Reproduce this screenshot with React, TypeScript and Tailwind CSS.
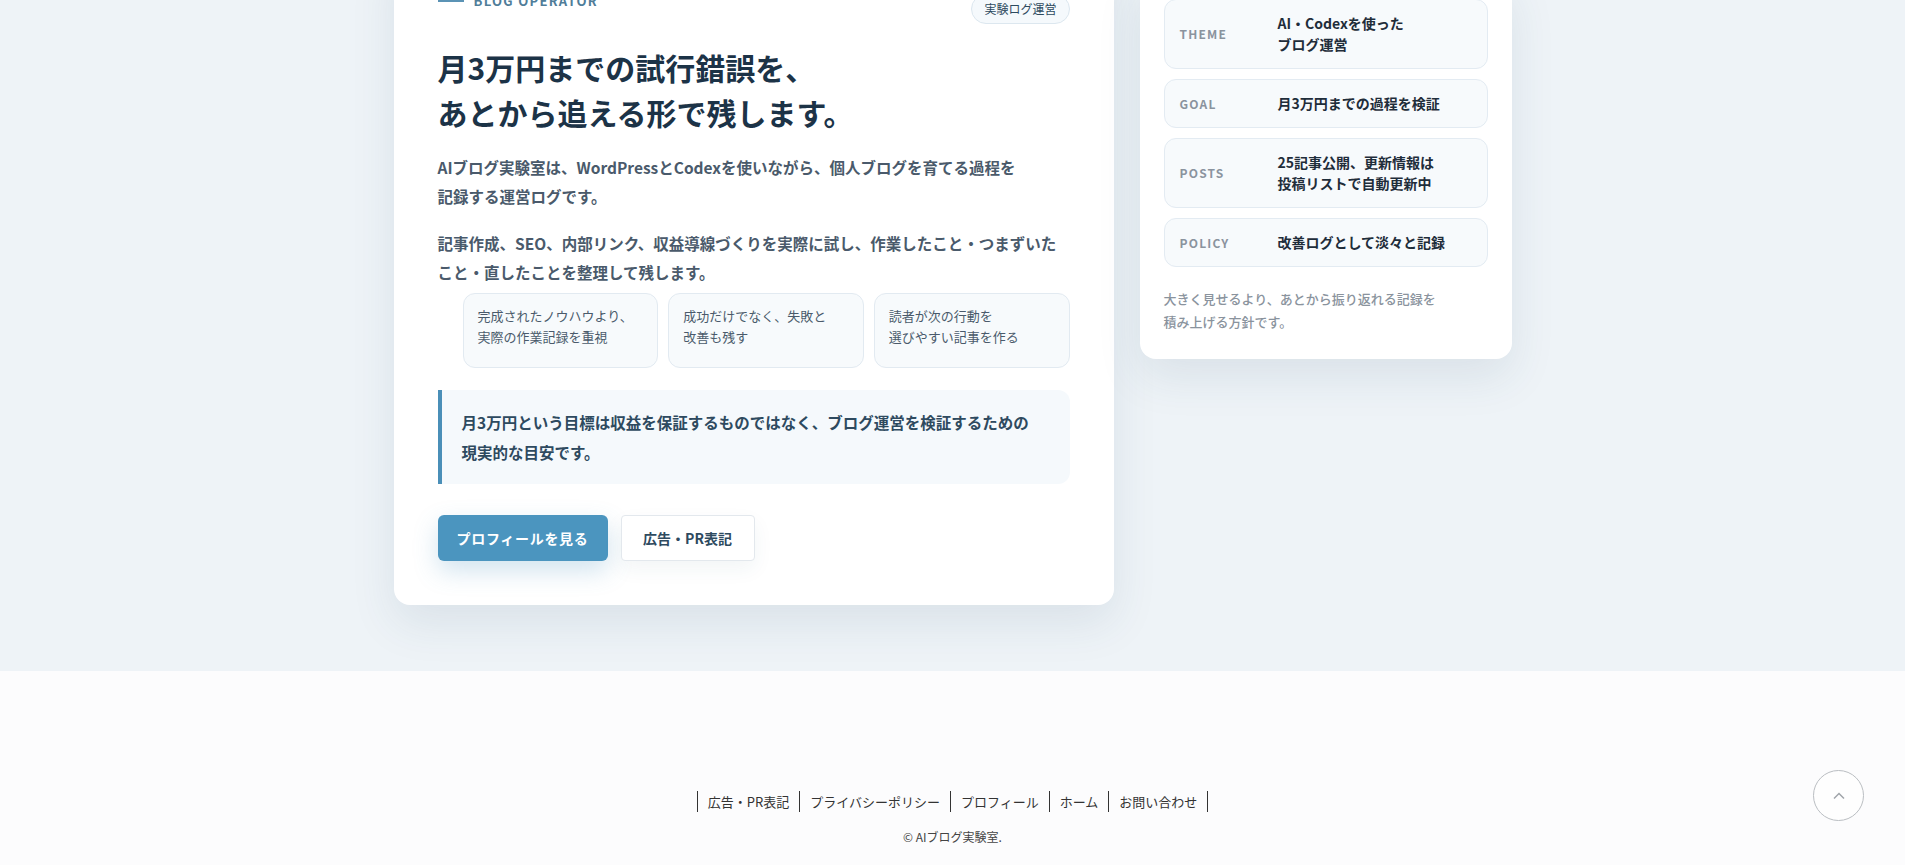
import React from "react";

const jp = { fontFamily: '"Noto Sans CJK JP", "Noto Sans", sans-serif' };

const rows = [
  { k: "THEME", v: ["AI・Codexを使った", "ブログ運営"] },
  { k: "GOAL", v: ["月3万円までの過程を検証"] },
  { k: "POSTS", v: ["25記事公開、更新情報は", "投稿リストで自動更新中"] },
  { k: "POLICY", v: ["改善ログとして淡々と記録"] },
];

const points = [
  ["完成されたノウハウより、", "実際の作業記録を重視"],
  ["成功だけでなく、失敗と", "改善も残す"],
  ["読者が次の行動を", "選びやすい記事を作る"],
];

const links = ["広告・PR表記", "プライバシーポリシー", "プロフィール", "ホーム", "お問い合わせ"];

export default function App() {
  return (
    <div className="min-h-[865px] bg-[#fcfcfd]" style={jp}>
      <section className="bg-[#eef3f7] pb-[66px] overflow-hidden">
        <div className="mx-auto w-[1118px] grid grid-cols-[720px_372px] gap-[26px] items-start -mt-[53px]">
          {/* main card */}
          <div className="bg-white rounded-[16px] shadow-[0_18px_45px_rgba(40,80,110,0.10)] px-[44px] pt-[44px] pb-[44px]">
            <div className="flex justify-between items-start">
              <div className="flex items-center gap-[10px] h-[20px]">
                <span className="block w-[26px] h-[2px] bg-[#5b93b5]" />
                <span className="text-[13px] font-semibold tracking-[0.1em] text-[#4f7d99]">BLOG OPERATOR</span>
              </div>
              <span className="mt-[3px] h-[30px] px-[12px] flex items-center rounded-full border border-[#dce7ef] bg-[#f5f9fc] text-[12px] text-[#2d4a5e]">
                実験ログ運営
              </span>
            </div>
            <h1 className="mt-[21px] text-[30px] leading-[45px] font-bold text-[#1c3347]">
              月3万円までの試行錯誤を、
              <br />
              あとから追える形で残します。
            </h1>
            <p className="mt-[18px] text-[15.5px] leading-[29px] font-semibold text-[#4a5a6b]">
              AIブログ実験室は、WordPressとCodexを使いながら、個人ブログを育てる過程を
              <br />
              記録する運営ログです。
            </p>
            <p className="mt-[18px] text-[15.5px] leading-[29px] font-semibold text-[#4a5a6b]">
              記事作成、SEO、内部リンク、収益導線づくりを実際に試し、作業したこと・つまずいたこと・直したことを整理して残します。
            </p>
            <ul className="mt-[6px] ml-[25px] grid grid-cols-3 gap-[10px]">
              {points.map((p, i) => (
                <li
                  key={i}
                  className="min-h-[75px] rounded-[12px] border border-[#e2eaf1] bg-[#f7fafc] px-[14px] pt-[11px] text-[13px] leading-[21px] text-[#4a5a6b]"
                >
                  {p[0]}
                  <br />
                  {p[1]}
                </li>
              ))}
            </ul>
            <div className="mt-[22px] border-l-[4px] border-[#4a8fb8] bg-[#f5f9fc] rounded-r-[12px] pl-[20px] pr-[20px] py-[17px] text-[15.5px] leading-[30px] font-semibold text-[#2e4a5f]">
              月3万円という目標は収益を保証するものではなく、ブログ運営を検証するための
              <br />
              現実的な目安です。
            </div>
            <div className="mt-[31px] flex gap-[13px]">
              <a className="h-[46px] w-[170px] flex items-center justify-center rounded-[6px] bg-[#4b95bf] text-white text-[14px] font-bold tracking-[0.05em] shadow-[0_10px_24px_rgba(75,149,191,0.25)]">
                プロフィールを見る
              </a>
              <a className="h-[46px] w-[134px] flex items-center justify-center rounded-[4px] bg-white border border-[#e3e8ed] text-[#2e4a5f] text-[14px] font-semibold shadow-[0_8px_20px_rgba(40,80,110,0.06)]">
                広告・PR表記
              </a>
            </div>
          </div>

          {/* side card */}
          <div className="mt-[28px] bg-white rounded-[16px] shadow-[0_18px_45px_rgba(40,80,110,0.10)] px-[24px] pt-[24px] pb-[26px]">
            <div className="flex flex-col gap-[10px]">
              {rows.map((r) => (
                <div
                  key={r.k}
                  className="grid grid-cols-[86px_1fr] gap-[12px] items-center rounded-[12px] border border-[#e3ebf2] bg-[#f7fafc] px-[15px] py-[13px]"
                >
                  <span className="text-[12px] font-bold tracking-[0.1em] text-[#8a939e]">{r.k}</span>
                  <span className="text-[14px] leading-[21px] font-semibold text-[#1f2d3a]">
                    {r.v.map((l, i) => (
                      <React.Fragment key={i}>
                        {i > 0 && <br />}
                        {l}
                      </React.Fragment>
                    ))}
                  </span>
                </div>
              ))}
            </div>
            <p className="mt-[20px] text-[13px] leading-[23px] font-medium text-[#8a939d]">
              大きく見せるより、あとから振り返れる記録を
              <br />
              積み上げる方針です。
            </p>
          </div>
        </div>
      </section>

      <footer className="pt-[120px] pb-[16px] flex flex-col items-center">
        <ul className="flex">
          {links.map((l, i) => (
            <li
              key={l}
              className={
                "px-[10px] h-[21px] flex items-center text-[13px] text-[#333] border-l border-[#333] " +
                (i === links.length - 1 ? "border-r" : "")
              }
            >
              {l}
            </li>
          ))}
        </ul>
        <p className="mt-[16px] text-[12px] text-[#444]">© AIブログ実験室.</p>
      </footer>

      <a className="fixed right-[41px] bottom-[44px] w-[51px] h-[51px] rounded-full border border-[#b9bdc1] bg-white/60 flex items-center justify-center">
        <svg width="14" height="14" viewBox="0 0 14 14" fill="none">
          <polyline points="2,9.5 7,4.5 12,9.5" stroke="#a0a5aa" strokeWidth="1.5" />
        </svg>
      </a>
    </div>
  );
}
